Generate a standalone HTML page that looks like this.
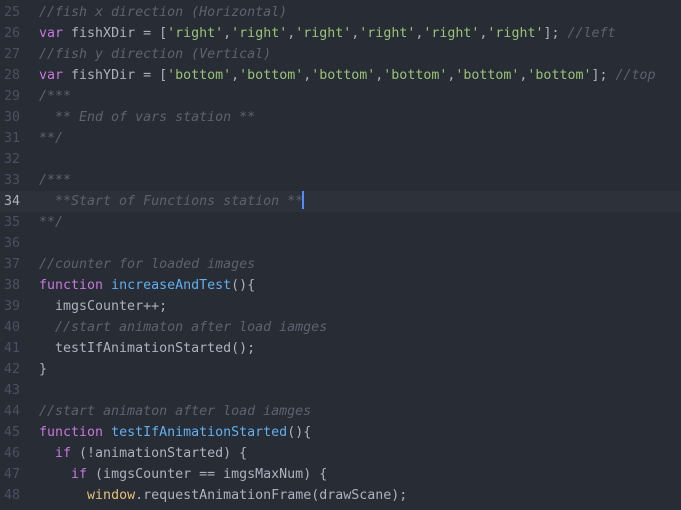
<!DOCTYPE html>
<html><head><meta charset="utf-8"><style>
html,body{margin:0;padding:0;background:#282c34;width:681px;height:510px;overflow:hidden}
.ed{position:absolute;left:0;top:2px;font-family:"DejaVu Sans Mono","Liberation Mono",monospace;font-size:13.3px;line-height:21px;color:#abb2bf}
.l{position:relative;height:21px;white-space:pre;width:681px}
.n{position:absolute;left:0;width:20px;text-align:right;color:#495162}
.c{position:absolute;left:39px}
.act{background:#2c313a}
.act .n{color:#abb2bf}
.cm{color:#5c6370;font-style:italic}
.k{color:#c678dd}.s{color:#98c379}.f{color:#61afef}.y{color:#e5c07b}
.cur{display:inline-block;width:2px;height:18px;background:#528bff;vertical-align:-4px;margin-left:-1px}
</style></head><body><div class="ed">
<div class="l"><span class="n">25</span><span class="c cm">//fish x direction (Horizontal)</span></div>
<div class="l"><span class="n">26</span><span class="c"><span class="k">var</span> fishXDir = [<span class="s">'right'</span>,<span class="s">'right'</span>,<span class="s">'right'</span>,<span class="s">'right'</span>,<span class="s">'right'</span>,<span class="s">'right'</span>]; <span class="cm">//left</span></span></div>
<div class="l"><span class="n">27</span><span class="c cm">//fish y direction (Vertical)</span></div>
<div class="l"><span class="n">28</span><span class="c"><span class="k">var</span> fishYDir = [<span class="s">'bottom'</span>,<span class="s">'bottom'</span>,<span class="s">'bottom'</span>,<span class="s">'bottom'</span>,<span class="s">'bottom'</span>,<span class="s">'bottom'</span>]; <span class="cm">//top</span></span></div>
<div class="l"><span class="n">29</span><span class="c cm">/***</span></div>
<div class="l"><span class="n">30</span><span class="c cm">  ** End of vars station **</span></div>
<div class="l"><span class="n">31</span><span class="c cm">**/</span></div>
<div class="l"><span class="n">32</span></div>
<div class="l"><span class="n">33</span><span class="c cm">/***</span></div>
<div class="l act"><span class="n">34</span><span class="c"><span class="cm">  **Start of Functions station **</span><span class="cur"></span></span></div>
<div class="l"><span class="n">35</span><span class="c cm">**/</span></div>
<div class="l"><span class="n">36</span></div>
<div class="l"><span class="n">37</span><span class="c cm">//counter for loaded images</span></div>
<div class="l"><span class="n">38</span><span class="c"><span class="k">function</span> <span class="f">increaseAndTest</span>(){</span></div>
<div class="l"><span class="n">39</span><span class="c">  imgsCounter++;</span></div>
<div class="l"><span class="n">40</span><span class="c cm">  //start animaton after load iamges</span></div>
<div class="l"><span class="n">41</span><span class="c">  testIfAnimationStarted();</span></div>
<div class="l"><span class="n">42</span><span class="c">}</span></div>
<div class="l"><span class="n">43</span></div>
<div class="l"><span class="n">44</span><span class="c cm">//start animaton after load iamges</span></div>
<div class="l"><span class="n">45</span><span class="c"><span class="k">function</span> <span class="f">testIfAnimationStarted</span>(){</span></div>
<div class="l"><span class="n">46</span><span class="c">  <span class="k">if</span> (!animationStarted) {</span></div>
<div class="l"><span class="n">47</span><span class="c">    <span class="k">if</span> (imgsCounter == imgsMaxNum) {</span></div>
<div class="l"><span class="n">48</span><span class="c">      <span class="y">window</span>.requestAnimationFrame(drawScane);</span></div>
</div></body></html>
